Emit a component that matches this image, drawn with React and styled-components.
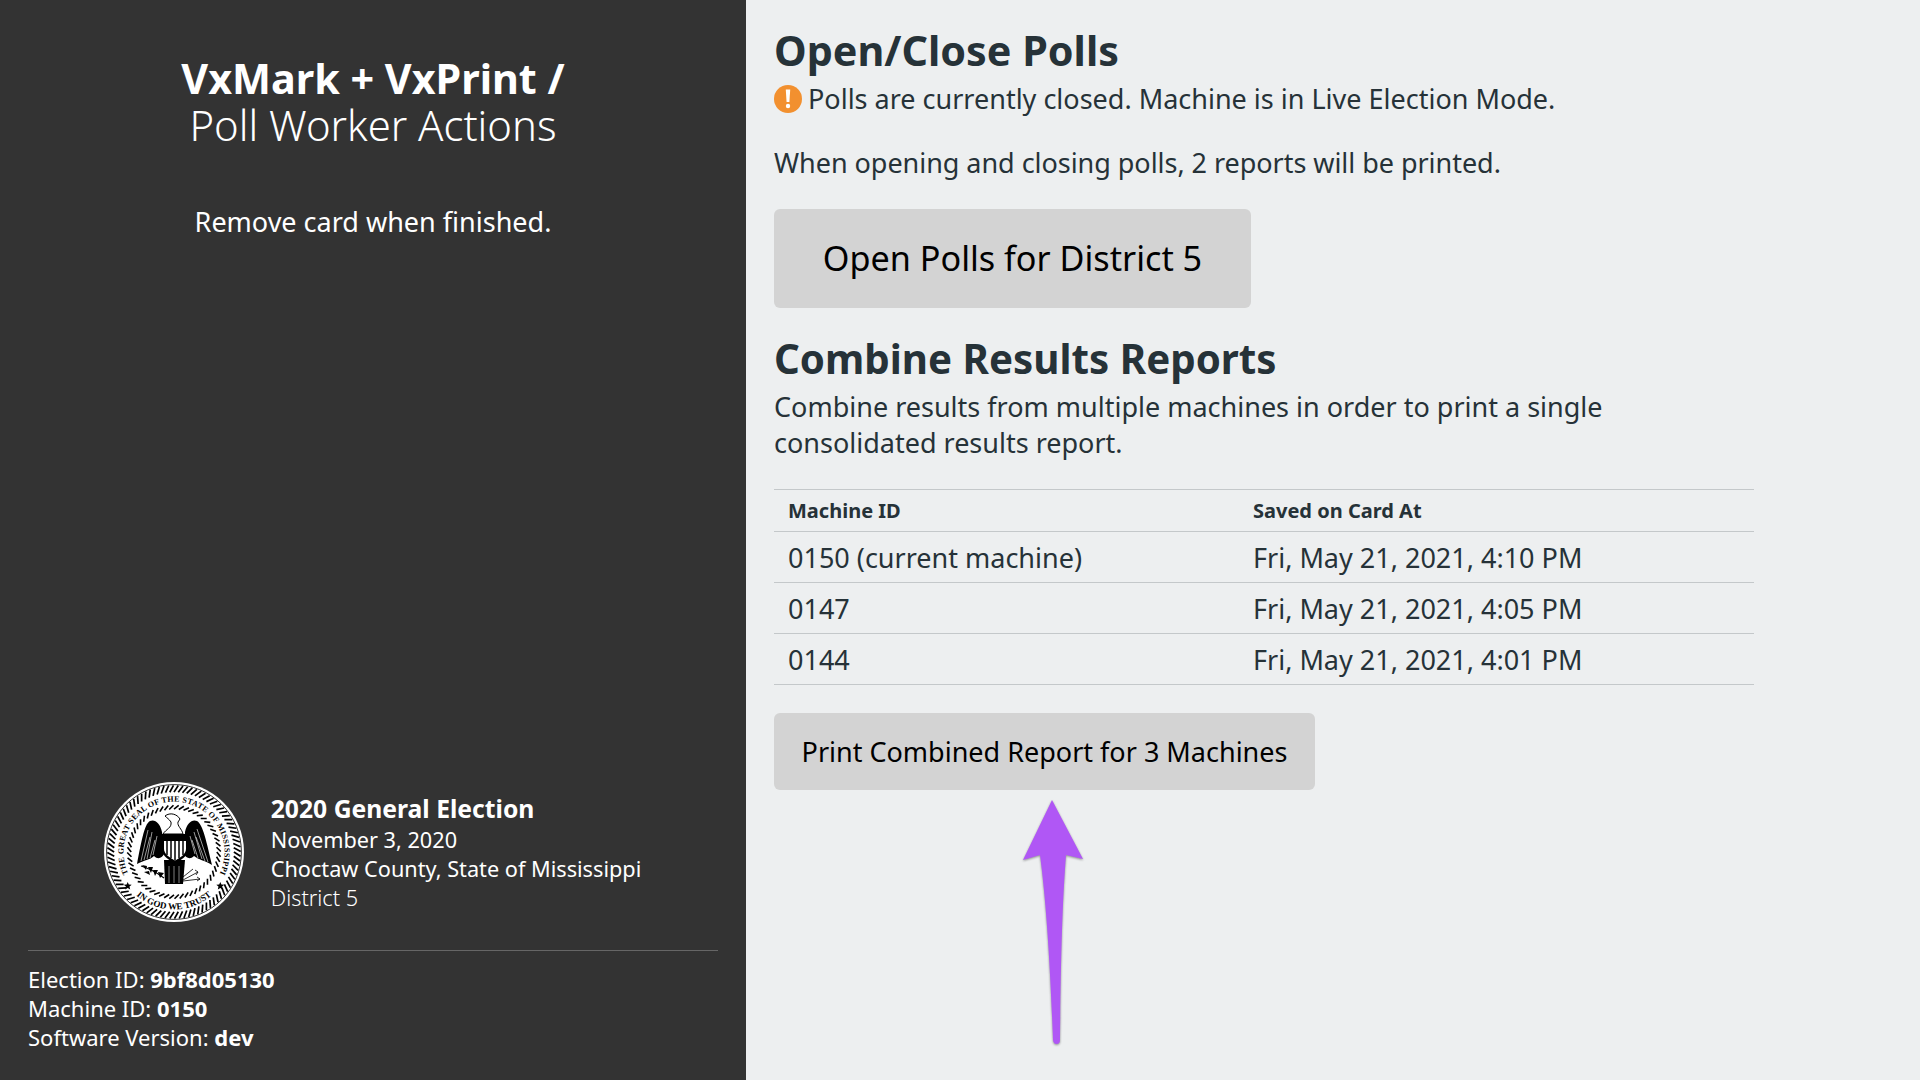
import styled, { createGlobalStyle } from "styled-components";

const GlobalStyle = createGlobalStyle`
  html, body {
    margin: 0;
    padding: 0;
    height: 100%;
  }
  body {
    font-family: "Noto Sans", "Open Sans", sans-serif;
    background: #edeff0;
  }
`;

const machines = [
  { id: "0150 (current machine)", savedAt: "Fri, May 21, 2021, 4:10 PM" },
  { id: "0147", savedAt: "Fri, May 21, 2021, 4:05 PM" },
  { id: "0144", savedAt: "Fri, May 21, 2021, 4:01 PM" },
];

const Rope = ({ r, n, w, sw }) => {
  const ticks = [];
  for (let i = 0; i < n; i++) {
    const a = (i / n) * Math.PI * 2;
    const b = a + (Math.PI * 2 * 0.9) / n;
    ticks.push(
      <line
        key={i}
        x1={70 + (r - w) * Math.cos(a)}
        y1={70 + (r - w) * Math.sin(a)}
        x2={70 + (r + w) * Math.cos(b)}
        y2={70 + (r + w) * Math.sin(b)}
        stroke="#000"
        strokeWidth={sw}
      />
    );
  }
  return <g>{ticks}</g>;
};

const Seal = () => (
  <svg width="140" height="140" viewBox="0 0 140 140">
    <defs>
      <path id="sealTop" d="M 28.6 99 A 50.5 50.5 0 1 1 111.4 99" />
      <path id="sealBottom" d="M 20.2 98.75 A 57.5 57.5 0 0 0 119.8 98.75" />
    </defs>
    <circle cx="70" cy="70" r="70" fill="#fff" />
    <circle cx="70" cy="70" r="67.4" fill="none" stroke="#000" strokeWidth="0.8" />
    <Rope r={63.3} n={88} w={3.4} sw={1.7} />
    <text fontFamily="Liberation Serif, serif" fontSize="8" fontWeight="700" fill="#000">
      <textPath href="#sealTop" startOffset="50%" textAnchor="middle" textLength="203" lengthAdjust="spacing">
        THE GREAT SEAL OF THE STATE OF MISSISSIPPI
      </textPath>
    </text>
    <text fontFamily="Liberation Serif, serif" fontSize="9" fontWeight="700" fill="#000">
      <textPath href="#sealBottom" startOffset="50%" textAnchor="middle">
        IN GOD WE TRUST
      </textPath>
    </text>
    <polygon points="23.7,100 24.8,102.6 27.7,102.8 25.5,104.6 26.2,107.4 23.7,105.9 21.2,107.4 21.9,104.6 19.7,102.8 22.6,102.6" fill="#000" />
    <polygon points="116.3,100 117.4,102.6 120.3,102.8 118.1,104.6 118.8,107.4 116.3,105.9 113.8,107.4 114.5,104.6 112.3,102.8 115.2,102.6" fill="#000" />
    <Rope r={44.8} n={56} w={2} sw={1.6} />
    {/* wings */}
    <path d="M58 50 C56 41 51 37 46 39 C40 42 37 62 33 82 C40 78 46 78 50 74 C54 78 58 76 60 72 Z" fill="#000" />
    <path d="M81 50 C83 41 88 37 93 39 C99 42 103 62 108 83 C100 78 95 78 90 74 C86 78 82 76 80 72 Z" fill="#000" />
    <g stroke="#fff" strokeWidth="0.6" fill="none">
      <path d="M44 48 L37 79" />
      <path d="M46 55 L40 78" />
      <path d="M48 50 L43 77" />
      <path d="M51 58 L46 76" />
      <path d="M53 54 L49 73" />
      <path d="M93 47 L104 80" />
      <path d="M92 55 L101 79" />
      <path d="M90 50 L98 77" />
      <path d="M88 58 L94 76" />
      <path d="M86 54 L91 72" />
    </g>
    {/* head and neck */}
    <path d="M61 34 C66 30 73 32 76 37 L74 40 C73 44 78 47 79 52 L59 52 C62 47 68 46 67 40 C65 37 63 36 61 34 Z" fill="#fff" stroke="#000" strokeWidth="1" />
    {/* body and tail */}
    <path d="M60 78 L81 78 L79 102 L61 102 Z" fill="#000" />
    <g stroke="#fff" strokeWidth="0.5">
      <line x1="65" y1="84" x2="65" y2="101" />
      <line x1="70" y1="84" x2="70" y2="101" />
      <line x1="75" y1="84" x2="75" y2="101" />
    </g>
    {/* shield */}
    <path d="M58 52 L84 52 L84 68 C84 74 76 79 71 81 C66 79 58 74 58 68 Z" fill="#000" />
    <path d="M60 59 L82 59 L82 67 C82 72 76 76 71 78.5 C66 76 60 72 60 67 Z" fill="#fff" />
    <g stroke="#000" strokeWidth="1.5">
      <line x1="63" y1="59" x2="63" y2="73" />
      <line x1="67" y1="59" x2="67" y2="76" />
      <line x1="71" y1="59" x2="71" y2="78" />
      <line x1="75" y1="59" x2="75" y2="76" />
      <line x1="79" y1="59" x2="79" y2="73" />
    </g>
    {/* olive branch */}
    <path d="M37 84 C44 86 52 90 60 96" stroke="#000" strokeWidth="1.1" fill="none" />
    <path d="M38 83 L43 84 L42 88 Z M44 85 L49 85 L47 91 Z M49 88 L54 88 L51 94 Z M54 90 L60 91 L56 96 Z M40 90 L45 89 L46 93 Z" fill="#000" />
    {/* arrows */}
    <g stroke="#000" strokeWidth="0.8" fill="none">
      <path d="M79 98 L94 90" />
      <path d="M79 99 L96 97" />
      <path d="M79 95 L89 87" />
      <path d="M91 88 L94 90 L92 93" />
      <path d="M93 95 L96 97 L93 99" />
    </g>
  </svg>
);

const WarnIcon = () => (
  <StatusIcon width="28" height="28" viewBox="0 0 28 28">
    <circle cx="14" cy="14" r="14" fill="#f2902f" />
    <path d="M11.8 4.5 H16.2 L15.4 17 H12.6 Z" fill="#fff" />
    <circle cx="14" cy="21" r="2.2" fill="#fff" />
  </StatusIcon>
);

const Arrow = () => (
  <ArrowOverlay width="80" height="260" viewBox="1020 795 80 260">
    <path
      d="M1052 800 L1083 859 L1066 855 C1063 895 1061 940 1060 1040 Q1060 1044 1056.5 1044 Q1053.5 1044 1053 1040 C1050 960 1046 900 1040 855 L1023 860 Z"
      fill="#b057f5"
    />
  </ArrowOverlay>
);

export default function App() {
  return (
    <Screen>
      <GlobalStyle />
      <Sidebar>
        <SidebarTop>
          <AppTitle>
            <strong>VxMark + VxPrint /</strong>
            <span>Poll Worker Actions</span>
          </AppTitle>
          <Hint>Remove card when finished.</Hint>
        </SidebarTop>
        <SidebarBottom>
          <ElectionInfo>
            <Seal />
            <ElectionText>
              <ElectionName>2020 General Election</ElectionName>
              <div>November 3, 2020</div>
              <div>Choctaw County, State of Mississippi</div>
              <District>District 5</District>
            </ElectionText>
          </ElectionInfo>
          <MetaList>
            <div>Election ID: <b>9bf8d05130</b></div>
            <div>Machine ID: <b>0150</b></div>
            <div>Software Version: <b>dev</b></div>
          </MetaList>
        </SidebarBottom>
      </Sidebar>

      <Main>
        <Heading>Open/Close Polls</Heading>
        <StatusLine>
          <WarnIcon />
          Polls are currently closed. Machine is in Live Election Mode.
        </StatusLine>
        <Para>When opening and closing polls, 2 reports will be printed.</Para>
        <BigButton>Open Polls for District 5</BigButton>

        <Heading $second>Combine Results Reports</Heading>
        <Description>
          Combine results from multiple machines in order to print a single
          <br />
          consolidated results report.
        </Description>
        <Table>
          <thead>
            <tr>
              <HeadCell>Machine ID</HeadCell>
              <HeadCell>Saved on Card At</HeadCell>
            </tr>
          </thead>
          <tbody>
            {machines.map((m) => (
              <tr key={m.id}>
                <Cell>{m.id}</Cell>
                <Cell>{m.savedAt}</Cell>
              </tr>
            ))}
          </tbody>
        </Table>
        <PrintButton>Print Combined Report for 3 Machines</PrintButton>
      </Main>
      <Arrow />
    </Screen>
  );
}

const Screen = styled.div`
  display: flex;
  width: 1920px;
  height: 1080px;
  overflow: hidden;
  position: relative;
`;

const Sidebar = styled.aside`
  width: 746px;
  flex: none;
  box-sizing: border-box;
  background: #333333;
  color: #ffffff;
  display: flex;
  flex-direction: column;
  justify-content: space-between;
  padding: 0 28px;
`;

const SidebarTop = styled.div`
  text-align: center;
  padding-top: 55px;
`;

const AppTitle = styled.h1`
  margin: 0;
  font-size: 41.8px;
  line-height: 46px;
  font-weight: 300;

  strong {
    display: block;
    font-size: 41.3px;
    font-weight: 700;
  }
  span {
    display: block;
    line-height: 47px;
  }
`;

const Hint = styled.p`
  margin: 56px 0 0;
  font-size: 27px;
  line-height: 36px;
`;

const SidebarBottom = styled.div`
  display: flex;
  flex-direction: column;
`;

const ElectionInfo = styled.div`
  display: flex;
  align-items: center;
  justify-content: center;
  gap: 27px;
  padding: 0 1px 28px 0;
  border-bottom: 1px solid #666666;
`;

const ElectionText = styled.div`
  font-size: 21.7px;
  line-height: 29px;
  margin-bottom: 2px;
`;

const ElectionName = styled.div`
  font-size: 24.7px;
  font-weight: 700;
  line-height: 33px;
  margin-top: 1px;
`;

const District = styled.div`
  font-weight: 300;
`;

const MetaList = styled.div`
  font-size: 22px;
  line-height: 29px;
  padding: 14px 0 28px;

  b {
    font-weight: 700;
  }
`;

const Main = styled.main`
  flex: 1;
  box-sizing: border-box;
  background: #edeff0;
  color: #263238;
  padding: 22px 0 0 28px;
  display: flex;
  flex-direction: column;
  align-items: flex-start;
`;

const Heading = styled.h2`
  margin: ${({ $second }) => ($second ? "23px 0 2px" : "0 0 3px")};
  font-size: ${({ $second }) => ($second ? "40.3px" : "41.3px")};
  line-height: 56px;
  font-weight: 700;
`;

const StatusLine = styled.p`
  margin: 0;
  font-size: 27px;
  line-height: 36px;
  display: flex;
  align-items: center;
  gap: 6px;
`;

const StatusIcon = styled.svg`
  flex: none;
`;

const Para = styled.p`
  margin: 28px 0 0;
  font-size: 27px;
  line-height: 36px;
  letter-spacing: -0.04px;
`;

const BigButton = styled.button`
  margin-top: 28px;
  width: 477px;
  height: 99px;
  border: none;
  border-radius: 6px;
  background: #d3d3d3;
  color: #000000;
  font-family: inherit;
  font-size: 34.2px;
  padding: 0 0 2px;
`;

const Description = styled.p`
  margin: 0;
  font-size: 27px;
  line-height: 36px;
`;

const Table = styled.table`
  margin-top: 28px;
  width: 980px;
  border-collapse: collapse;
  table-layout: fixed;
  border-top: 1px solid #c4c8ca;
`;

const HeadCell = styled.th`
  text-align: left;
  font-size: 20px;
  font-weight: 700;
  height: 41px;
  padding: 0 14px;
  border-bottom: 1px solid #c4c8ca;

  &:first-child {
    width: 437px;
  }
`;

const Cell = styled.td`
  font-size: 27px;
  height: 50px;
  padding: 0 14px;
  border-bottom: 1px solid #c4c8ca;
`;

const PrintButton = styled.button`
  margin-top: 28px;
  width: 541px;
  height: 77px;
  border: none;
  border-radius: 6px;
  background: #d3d3d3;
  color: #000000;
  font-family: inherit;
  font-size: 27px;
  padding: 0;
`;

const ArrowOverlay = styled.svg`
  position: absolute;
  left: 1020px;
  top: 795px;
  filter: drop-shadow(0 1px 1px rgba(0, 0, 0, 0.4));
`;
